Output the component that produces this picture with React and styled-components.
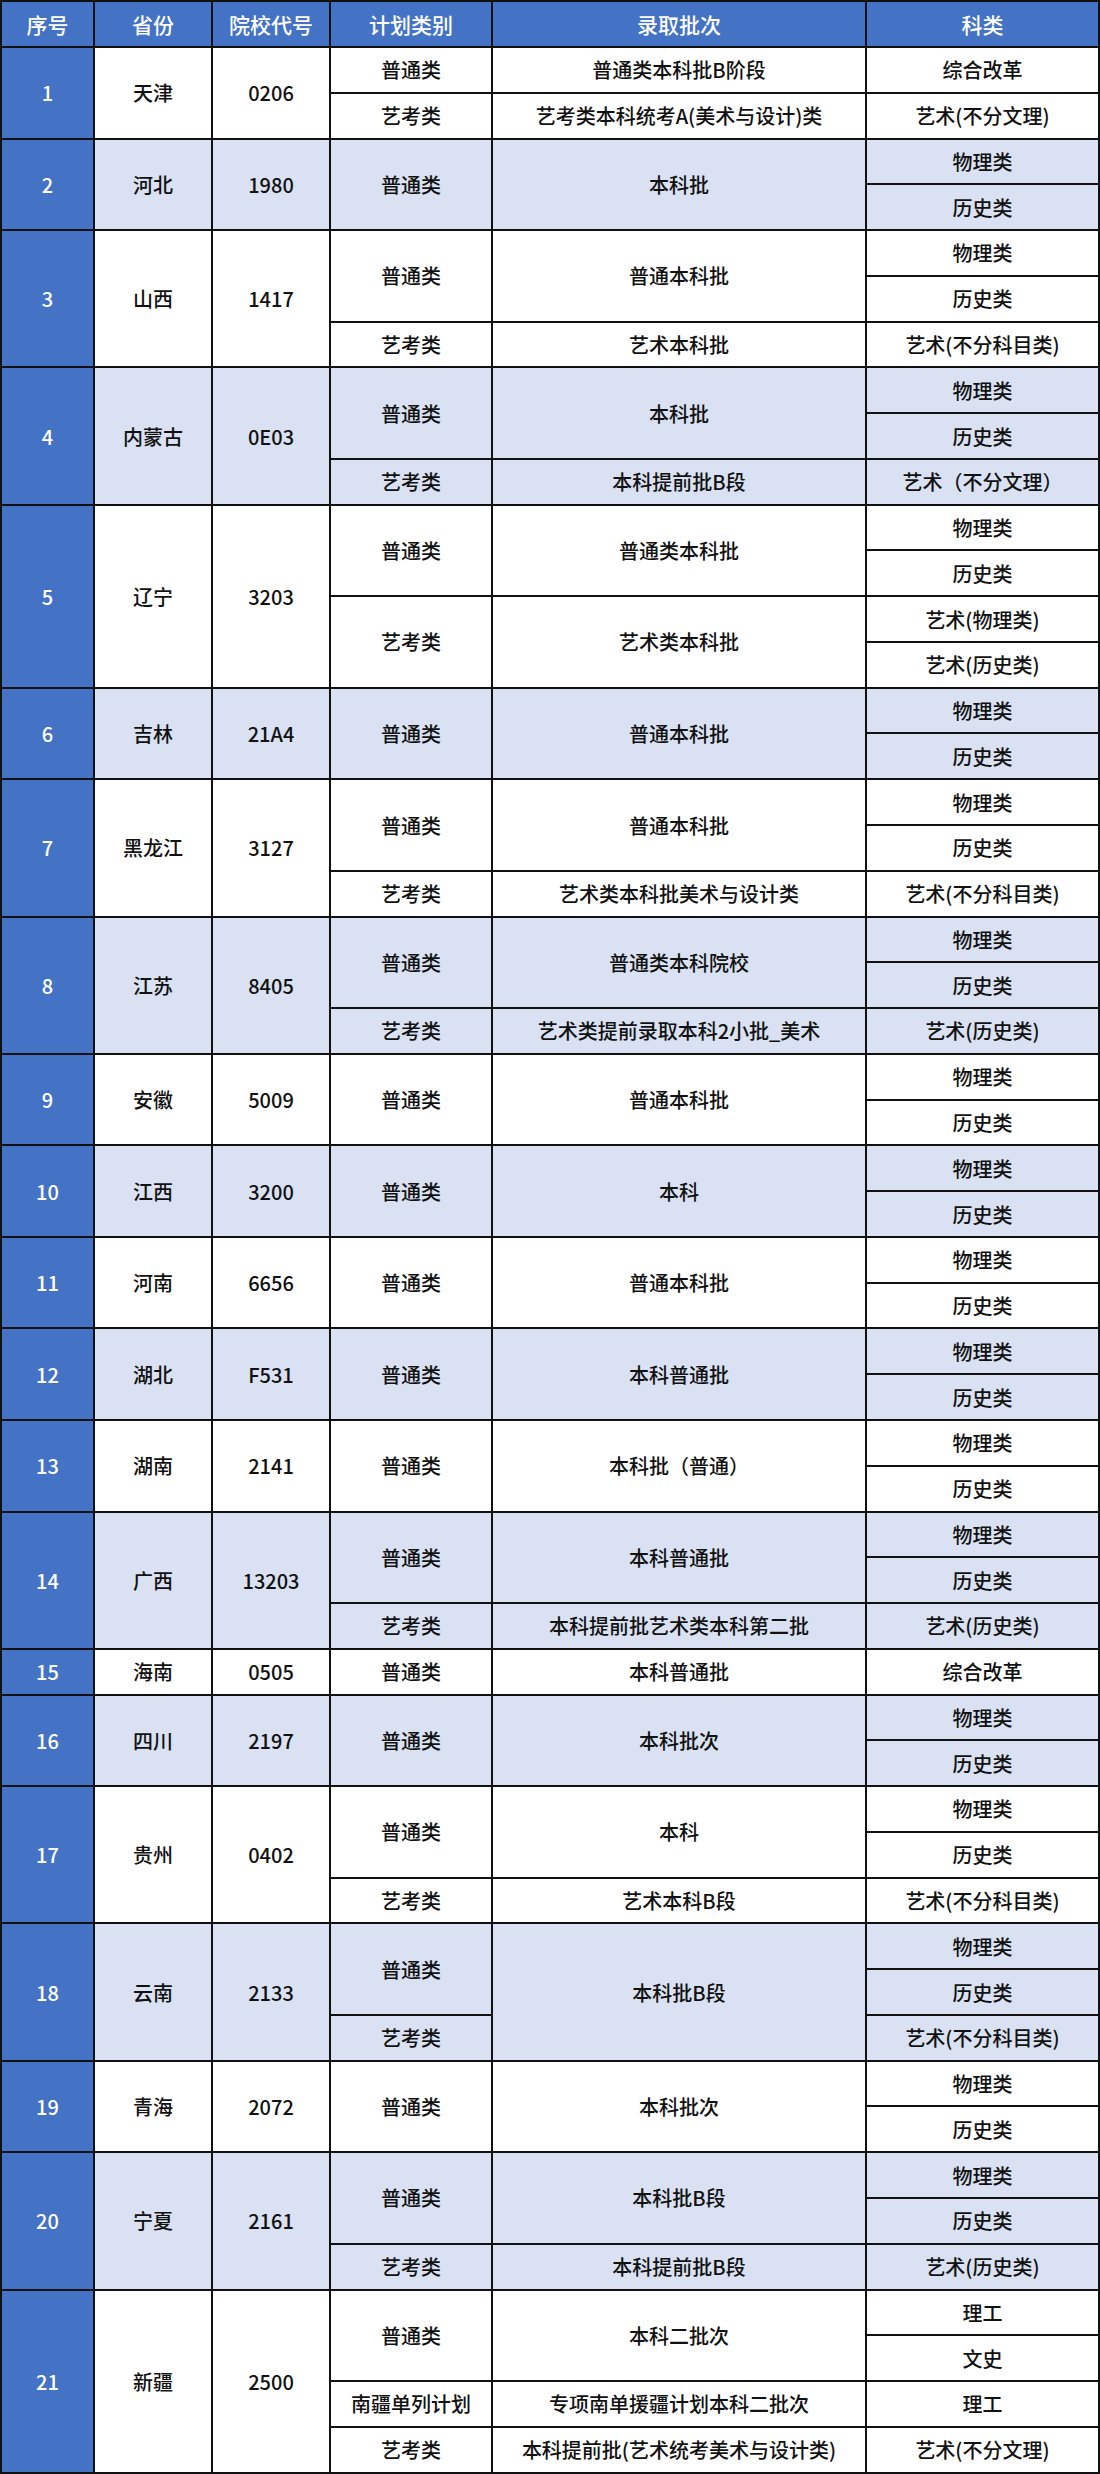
import React from 'react'
import styled, { createGlobalStyle } from 'styled-components'

const GlobalStyle = createGlobalStyle`
  html, body {
    margin: 0;
    padding: 0;
    background: #ffffff;
  }
  body {
    font-family: "Noto Sans CJK SC", "Noto Sans", sans-serif;
  }
`

const BLUE = '#4472C4'
const LIGHT = '#D9E1F2'

const Table = styled.div`
  display: grid;
  width: 1100px;
  box-sizing: border-box;
  grid-template-columns: 91px 116px 116px 160px 372px 231px;
  grid-template-rows: 44px;
  grid-auto-rows: 43.77px;
  gap: 2px;
  padding: 2px;
  background: #111;
`

const HeadCell = styled.div`
  display: flex;
  align-items: center;
  justify-content: center;
  background: ${BLUE};
  color: #ffffff;
  font-size: 21px;
  font-weight: 500;
`

const Cell = styled.div`
  display: flex;
  align-items: center;
  justify-content: center;
  grid-column: ${p => p.$col};
  grid-row: ${p => p.$row} / span ${p => p.$span || 1};
  background: ${p => (p.$shade ? LIGHT : '#ffffff')};
  color: #111;
  font-size: 20px;
  font-weight: 500;
  white-space: nowrap;
`

const SeqCell = styled(Cell)`
  background: ${BLUE};
  color: #ffffff;
`

const headers = ['序号', '省份', '院校代号', '计划类别', '录取批次', '科类']

// plans / batches: [text, rowspan]
const groups = [
  { p: '天津', c: '0206', plans: [['普通类', 1], ['艺考类', 1]], batches: [['普通类本科批B阶段', 1], ['艺考类本科统考A(美术与设计)类', 1]], subs: ['综合改革', '艺术(不分文理)'] },
  { p: '河北', c: '1980', plans: [['普通类', 2]], batches: [['本科批', 2]], subs: ['物理类', '历史类'] },
  { p: '山西', c: '1417', plans: [['普通类', 2], ['艺考类', 1]], batches: [['普通本科批', 2], ['艺术本科批', 1]], subs: ['物理类', '历史类', '艺术(不分科目类)'] },
  { p: '内蒙古', c: '0E03', plans: [['普通类', 2], ['艺考类', 1]], batches: [['本科批', 2], ['本科提前批B段', 1]], subs: ['物理类', '历史类', '艺术（不分文理）'] },
  { p: '辽宁', c: '3203', plans: [['普通类', 2], ['艺考类', 2]], batches: [['普通类本科批', 2], ['艺术类本科批', 2]], subs: ['物理类', '历史类', '艺术(物理类)', '艺术(历史类)'] },
  { p: '吉林', c: '21A4', plans: [['普通类', 2]], batches: [['普通本科批', 2]], subs: ['物理类', '历史类'] },
  { p: '黑龙江', c: '3127', plans: [['普通类', 2], ['艺考类', 1]], batches: [['普通本科批', 2], ['艺术类本科批美术与设计类', 1]], subs: ['物理类', '历史类', '艺术(不分科目类)'] },
  { p: '江苏', c: '8405', plans: [['普通类', 2], ['艺考类', 1]], batches: [['普通类本科院校', 2], ['艺术类提前录取本科2小批_美术', 1]], subs: ['物理类', '历史类', '艺术(历史类)'] },
  { p: '安徽', c: '5009', plans: [['普通类', 2]], batches: [['普通本科批', 2]], subs: ['物理类', '历史类'] },
  { p: '江西', c: '3200', plans: [['普通类', 2]], batches: [['本科', 2]], subs: ['物理类', '历史类'] },
  { p: '河南', c: '6656', plans: [['普通类', 2]], batches: [['普通本科批', 2]], subs: ['物理类', '历史类'] },
  { p: '湖北', c: 'F531', plans: [['普通类', 2]], batches: [['本科普通批', 2]], subs: ['物理类', '历史类'] },
  { p: '湖南', c: '2141', plans: [['普通类', 2]], batches: [['本科批（普通）', 2]], subs: ['物理类', '历史类'] },
  { p: '广西', c: '13203', plans: [['普通类', 2], ['艺考类', 1]], batches: [['本科普通批', 2], ['本科提前批艺术类本科第二批', 1]], subs: ['物理类', '历史类', '艺术(历史类)'] },
  { p: '海南', c: '0505', plans: [['普通类', 1]], batches: [['本科普通批', 1]], subs: ['综合改革'] },
  { p: '四川', c: '2197', plans: [['普通类', 2]], batches: [['本科批次', 2]], subs: ['物理类', '历史类'] },
  { p: '贵州', c: '0402', plans: [['普通类', 2], ['艺考类', 1]], batches: [['本科', 2], ['艺术本科B段', 1]], subs: ['物理类', '历史类', '艺术(不分科目类)'] },
  { p: '云南', c: '2133', plans: [['普通类', 2], ['艺考类', 1]], batches: [['本科批B段', 3]], subs: ['物理类', '历史类', '艺术(不分科目类)'] },
  { p: '青海', c: '2072', plans: [['普通类', 2]], batches: [['本科批次', 2]], subs: ['物理类', '历史类'] },
  { p: '宁夏', c: '2161', plans: [['普通类', 2], ['艺考类', 1]], batches: [['本科批B段', 2], ['本科提前批B段', 1]], subs: ['物理类', '历史类', '艺术(历史类)'] },
  { p: '新疆', c: '2500', plans: [['普通类', 2], ['南疆单列计划', 1], ['艺考类', 1]], batches: [['本科二批次', 2], ['专项南单援疆计划本科二批次', 1], ['本科提前批(艺术统考美术与设计类)', 1]], subs: ['理工', '文史', '理工', '艺术(不分文理)'] },
]

function Group({ g, index, row }) {
  const n = g.subs.length
  const shade = index % 2 === 1
  const stacked = (items, col) => {
    let r = row
    return items.map(([t, s], j) => {
      const cell = (
        <Cell key={col + '-' + j} $col={col} $row={r} $span={s} $shade={shade}>{t}</Cell>
      )
      r += s
      return cell
    })
  }
  return (
    <>
      <SeqCell $col={1} $row={row} $span={n}>{index + 1}</SeqCell>
      <Cell $col={2} $row={row} $span={n} $shade={shade}>{g.p}</Cell>
      <Cell $col={3} $row={row} $span={n} $shade={shade}>{g.c}</Cell>
      {stacked(g.plans, 4)}
      {stacked(g.batches, 5)}
      {g.subs.map((t, j) => (
        <Cell key={'k' + j} $col={6} $row={row + j} $shade={shade}>{t}</Cell>
      ))}
    </>
  )
}

export default function App() {
  let row = 2
  const rows = groups.map((g, i) => {
    const start = row
    row += g.subs.length
    return <Group key={g.p} g={g} index={i} row={start} />
  })

  return (
    <>
      <GlobalStyle />
      <Table>
        {headers.map(h => (
          <HeadCell key={h}>{h}</HeadCell>
        ))}
        {rows}
      </Table>
    </>
  )
}
